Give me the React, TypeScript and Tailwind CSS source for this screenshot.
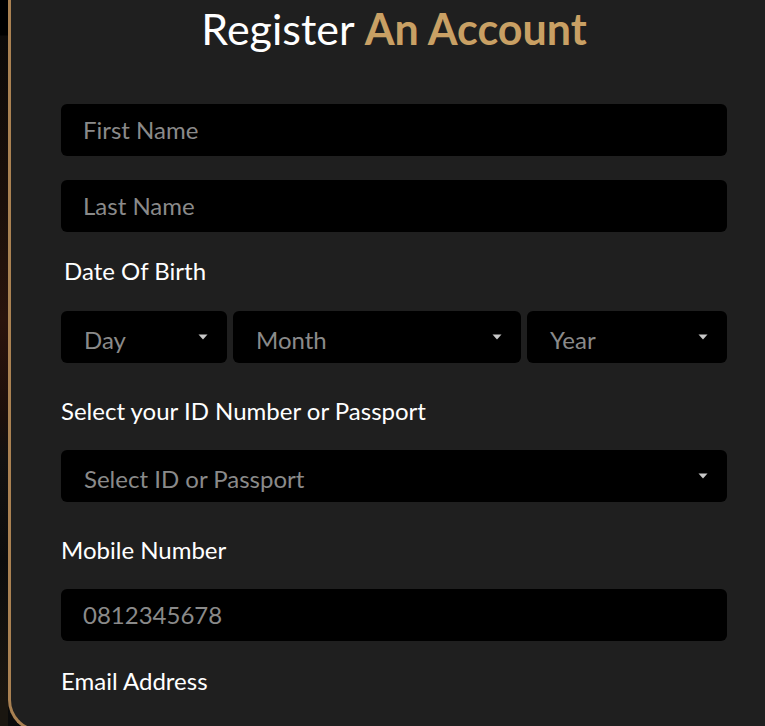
import { useState } from "react";

function Caret() {
  return (
    <svg width="10" height="6" viewBox="0 0 10 6" className="shrink-0">
      <path d="M0.5 0.5h9L5 5.5z" fill="#c8c8c8" />
    </svg>
  );
}

function Field({ placeholder, value, onChange }: { placeholder: string; value: string; onChange: (v: string) => void }) {
  return (
    <input
      value={value}
      onChange={(e) => onChange(e.target.value)}
      placeholder={placeholder}
      className="h-[52px] w-full rounded-md bg-black px-[22px] pb-[2px] text-[24px] text-white outline-none placeholder:text-[#8a8a8a]"
    />
  );
}

function Select({ label, className }: { label: string; className: string }) {
  return (
    <div className={`flex h-[52px] items-center justify-between rounded-md bg-black pl-[23px] pr-[19px] ${className}`}>
      <span className="pt-[5px] text-[24px] text-[#8a8a8a]">{label}</span>
      <Caret />
    </div>
  );
}

export default function App() {
  const [form, setForm] = useState({ first: "", last: "", mobile: "" });

  return (
    <div className="flex h-[726px] w-[765px] overflow-hidden bg-[#0b0b0b] font-['Lato','Noto_Sans',sans-serif]">
      {/* blurred backdrop strip on the left */}
      <div className="h-full w-[8px] shrink-0 bg-[linear-gradient(to_bottom,#000_0px,#000_35px,#0c0a09_36px,#1a0f0a_200px,#2a130c_320px,#1c0f0b_420px,#111_460px,#0c0c0c_560px,#1a1610_700px)]" />

      <div className="flex h-[732px] flex-1 shrink-0 flex-col rounded-bl-[32px] border-l-[3px] border-b-[3px] border-[#a98152] bg-[#1f1f1f] pl-[50px] pr-[38px]">
        <h1 className="mt-[3px] text-center text-[43px] leading-[52px] text-white">
          Register <span className="font-bold text-[#c9a064]">An Account</span>
        </h1>

        <div className="mt-[49px]">
          <Field placeholder="First Name" value={form.first} onChange={(v) => setForm({ ...form, first: v })} />
        </div>
        <div className="mt-[24px]">
          <Field placeholder="Last Name" value={form.last} onChange={(v) => setForm({ ...form, last: v })} />
        </div>

        <p className="mt-[24px] pl-[3px] text-[24px] leading-[29px] text-white">Date Of Birth</p>
        <div className="mt-[26px] flex gap-[6px]">
          <Select label="Day" className="w-[166px]" />
          <Select label="Month" className="flex-1" />
          <Select label="Year" className="w-[200px]" />
        </div>

        <p className="mt-[33px] text-[24px] leading-[29px] text-white">Select your ID Number or Passport</p>
        <div className="mt-[25px]">
          <Select label="Select ID or Passport" className="w-full" />
        </div>

        <p className="mt-[33px] text-[24px] leading-[29px] text-white">Mobile Number</p>
        <div className="mt-[25px]">
          <Field placeholder="0812345678" value={form.mobile} onChange={(v) => setForm({ ...form, mobile: v })} />
        </div>

        <p className="mt-[25px] text-[24px] leading-[29px] text-white">Email Address</p>
      </div>
    </div>
  );
}
